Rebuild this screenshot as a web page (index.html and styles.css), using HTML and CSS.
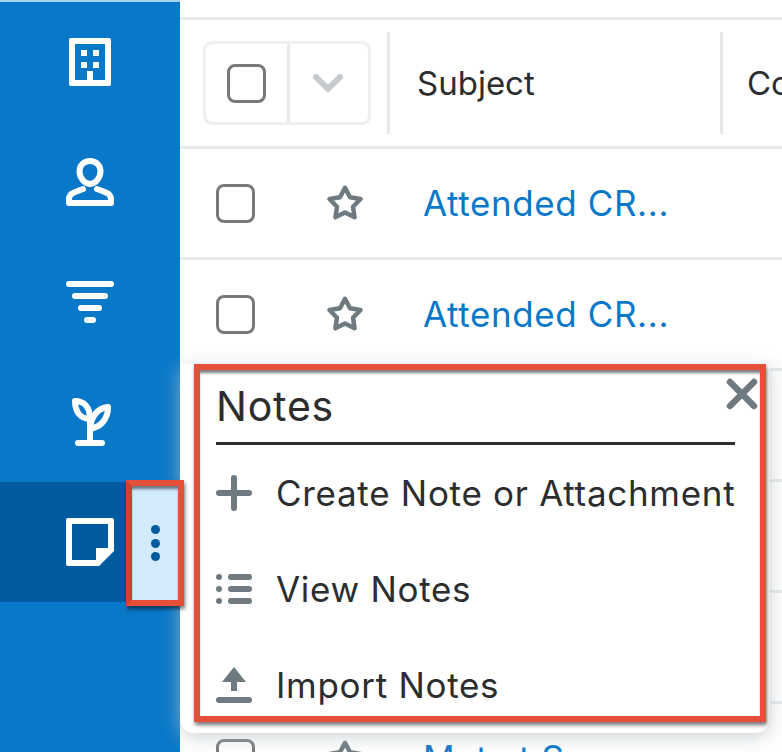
FILE: index.html
```html
<!DOCTYPE html>
<html lang="en">
<head>
<meta charset="utf-8">
<title>Notes menu</title>
<link rel="stylesheet" href="styles.css">
</head>
<body>
<div class="page">
  <nav class="sidebar">
    <a class="nav-item">
      <svg class="nav-icon" viewBox="0 0 48 48"><path class="fill-white" fill-rule="evenodd" d="M5 0H43a2 2 0 0 1 2 2V46a2 2 0 0 1-2 2H5a2 2 0 0 1-2-2V2a2 2 0 0 1 2-2ZM9 6V42H21V33H27V42H39V6ZM15 12H21V18H15ZM27 12H33V18H27ZM15 24H21V30H15ZM27 24H33V30H27Z"/></svg>
    </a>
    <a class="nav-item">
      <svg class="nav-icon" viewBox="0 0 48 48"><path class="line-white" d="M24 3C18 3 13.500 7.500 13.500 13C13.500 19 18 26 24 26C30 26 34.500 19 34.500 13C34.500 7.500 30 3 24 3Z"/><path class="line-white" d="M17 31L8 34.500Q3 36.500 3 41V45H45V41Q45 36.500 40 34.500L31 31"/></svg>
    </a>
    <a class="nav-item">
      <svg class="nav-icon" viewBox="0 0 48 48"><rect class="fill-white" x="0" y="3" width="48" height="6" rx="3"/><rect class="fill-white" x="6" y="15" width="36" height="6" rx="3"/><rect class="fill-white" x="12" y="27" width="24" height="6" rx="3"/><rect class="fill-white" x="18" y="39" width="12" height="6" rx="3"/></svg>
    </a>
    <a class="nav-item">
      <svg class="nav-icon" viewBox="0 0 48 48"><path class="line-white" d="M9 3C18 3 24 9 24 21C14 21 9 13 9 3Z"/><path class="line-white" d="M42 9C32 10 25 18 24 31C35 29 42 21 42 9Z"/><path class="line-white" d="M24 21V45M12 45H36"/></svg>
    </a>
    <a class="nav-item active">
      <svg class="nav-icon" viewBox="0 0 48 48"><path class="fill-white" fill-rule="evenodd" d="M2 0H46a2 2 0 0 1 2 2V33L33 48H2a2 2 0 0 1-2-2V2a2 2 0 0 1 2-2ZM6 6V42H30V30H42V6Z"/></svg>
      <span class="more">
        <i class="dot"></i><i class="dot"></i><i class="dot"></i>
      </span>
    </a>
  </nav>

  <main class="main">
    <div class="head">
      <div class="select-group">
        <span class="select-check"><span class="checkbox"></span></span>
        <span class="select-caret">
          <svg class="caret" viewBox="0 0 30 18"><path d="M3 3L15 15L27 3"/></svg>
        </span>
      </div>
      <div class="col col-subject">Subject</div>
      <div class="col col-next">Contact</div>
    </div>
    <div class="row">
      <span class="checkbox"></span>
      <svg class="star" viewBox="0 0 36 36"><path d="M18 2.800L23 12.200L33.500 14L26 21.700L27.600 32.300L18 27.500L8.400 32.300L10 21.700L2.500 14L13 12.200Z"/></svg>
      <a class="link">Attended CR...</a>
    </div>
    <div class="row">
      <span class="checkbox"></span>
      <svg class="star" viewBox="0 0 36 36"><path d="M18 2.800L23 12.200L33.500 14L26 21.700L27.600 32.300L18 27.500L8.400 32.300L10 21.700L2.500 14L13 12.200Z"/></svg>
      <a class="link">Attended CR...</a>
    </div>
    <div class="row"></div>
    <div class="row"></div>
    <div class="row"></div>
    <div class="row">
      <span class="checkbox"></span>
      <svg class="star" viewBox="0 0 36 36"><path d="M18 2.800L23 12.200L33.500 14L26 21.700L27.600 32.300L18 27.500L8.400 32.300L10 21.700L2.500 14L13 12.200Z"/></svg>
      <a class="link">Met at Sugar</a>
    </div>
  </main>

  <section class="popover">
    <header class="pop-head">
      <h2 class="pop-title">Notes</h2>
      <svg class="pop-close" viewBox="0 0 32 32"><path d="M4 4L28 28M28 4L4 28"/></svg>
    </header>
    <div class="pop-item">
      <svg class="pop-icon" viewBox="0 0 36 36"><path class="line-grey" d="M3 18H33M18 3V33"/></svg>
      <span>Create Note or Attachment</span>
    </div>
    <div class="pop-item">
      <svg class="pop-icon" viewBox="0 0 36 36"><circle class="fill-grey" cx="3" cy="6" r="3"/><circle class="fill-grey" cx="3" cy="18" r="3"/><circle class="fill-grey" cx="3" cy="30" r="3"/><path class="line-grey" d="M15 6H33M15 18H33M15 30H33"/></svg>
      <span>View Notes</span>
    </div>
    <div class="pop-item">
      <svg class="pop-icon" viewBox="0 0 36 36"><path class="fill-grey" d="M18 0L30 15H21V24H15V15H6Z"/><path class="line-grey" d="M3 33H33"/></svg>
      <span>Import Notes</span>
    </div>
    <div class="pop-frame"></div>
  </section>
</div>
</body>
</html>
```

FILE: styles.css
```css
* { box-sizing: border-box; }

html, body {
  margin: 0;
  height: 752px;
  overflow: hidden;
  background: #fff;
}

body {
  font-family: Inter, "Liberation Sans", sans-serif;
  color: #2b2d2f;
}

.page {
  position: relative;
  display: flex;
  width: 782px;
  height: 752px;
  overflow: hidden;
}

/* Sidebar */
.sidebar {
  flex: 0 0 180px;
  background: #0a78c9;
  border-top: 2px solid #a9d3f4;
}

.nav-item {
  position: relative;
  display: flex;
  align-items: center;
  justify-content: center;
  height: 120px;
}

.nav-item.active { background: #005a9e; }

.nav-icon {
  display: block;
  width: 48px;
  height: 48px;
}

.fill-white { fill: #fff; }

.line-white {
  fill: none;
  stroke: #fff;
  stroke-width: 6;
  stroke-linecap: round;
  stroke-linejoin: round;
}

.more {
  position: absolute;
  z-index: 3;
  left: 126px;
  top: -2px;
  width: 58px;
  height: 126px;
  display: flex;
  flex-direction: column;
  align-items: center;
  justify-content: center;
  gap: 4.500px;
  background: #d3e9fc;
  border: 6px solid #e54e37;
  border-left-color: #d2412e;
  box-shadow: 1px 3px 4px rgba(0, 0, 0, .55), inset 0 4px 3px -1px rgba(0, 0, 0, .5);
}

.dot {
  display: block;
  width: 9px;
  height: 9px;
  border-radius: 50%;
  background: #005a9e;
}

/* Table */
.main {
  flex: 1 1 auto;
  min-width: 0;
  padding-top: 17px;
}

.head {
  display: flex;
  align-items: center;
  height: 132px;
  padding-left: 23px;
  border-top: 3px solid #e6eaed;
  border-bottom: 3px solid #e6eaed;
  white-space: nowrap;
}

.select-group {
  display: flex;
  flex: 0 0 168px;
  height: 84px;
  margin-right: 16px;
  border: 3px solid #edf0f2;
  border-radius: 9px;
}

.select-check {
  display: flex;
  align-items: center;
  justify-content: center;
  width: 84px;
  border-right: 3px solid #e6eaed;
}

.select-caret {
  display: flex;
  flex: 1;
  align-items: center;
  justify-content: center;
}

.caret {
  width: 30px;
  height: 18px;
  margin-left: -2px;
}

.caret path {
  fill: none;
  stroke: #c6cacd;
  stroke-width: 6;
  stroke-linecap: round;
  stroke-linejoin: round;
}

.col {
  display: flex;
  align-items: center;
  height: 102px;
  border-left: 3px solid #e6eaed;
  font-size: 33px;
}

.col-subject {
  flex: 0 0 333px;
  padding-left: 27px;
}

.col-next { padding-left: 24px; }

.checkbox {
  display: block;
  flex: none;
  width: 39px;
  height: 39px;
  border: 3px solid #77797b;
  border-radius: 8px;
  background: #fff;
}

.row {
  display: flex;
  align-items: center;
  height: 111px;
  padding-left: 36px;
  border-bottom: 3px solid #e6eaed;
  white-space: nowrap;
}

.star {
  flex: none;
  width: 36px;
  height: 36px;
  margin-left: 72px;
}

.star path {
  fill: none;
  stroke: #6f7a80;
  stroke-width: 4.500;
  stroke-linejoin: round;
}

.link {
  margin-left: 60px;
  font-size: 35px;
  letter-spacing: .6px;
  color: #0a78c9;
}

/* Popover */
.popover {
  position: absolute;
  z-index: 2;
  left: 180px;
  top: 364px;
  width: 590px;
  height: 369px;
  padding-left: 36px;
  background: #fff;
  border-radius: 0 0 14px 14px;
  box-shadow: 0 4px 18px rgba(185, 192, 198, .7);
}

.pop-head {
  display: flex;
  align-items: center;
  width: 519px;
  height: 81px;
  padding-top: 5px;
  border-bottom: 3px solid #2b2d2f;
}

.pop-title {
  margin: 0;
  font-size: 41px;
  font-weight: 400;
  letter-spacing: .8px;
  color: #2b2d2f;
}

.pop-close {
  position: absolute;
  left: 546px;
  top: 14px;
  width: 32px;
  height: 32px;
}

.pop-close path {
  fill: none;
  stroke: #6f7a80;
  stroke-width: 6.500;
  stroke-linecap: round;
}

.pop-item {
  display: flex;
  align-items: center;
  gap: 24px;
  height: 96px;
  font-size: 35px;
  letter-spacing: .7px;
  white-space: nowrap;
  color: #2b2d2f;
}

.pop-icon {
  flex: none;
  width: 36px;
  height: 36px;
  overflow: visible;
}

.fill-grey { fill: #6f7a80; }

.line-grey {
  fill: none;
  stroke: #6f7a80;
  stroke-width: 6;
  stroke-linecap: round;
}

.pop-frame {
  position: absolute;
  left: 14px;
  top: 0;
  right: 4px;
  bottom: 11px;
  border: 6px solid #e54e37;
  box-shadow: 1px 3px 4px rgba(0, 0, 0, .55), inset 0 4px 3px -1px rgba(0, 0, 0, .5);
  pointer-events: none;
}
```
